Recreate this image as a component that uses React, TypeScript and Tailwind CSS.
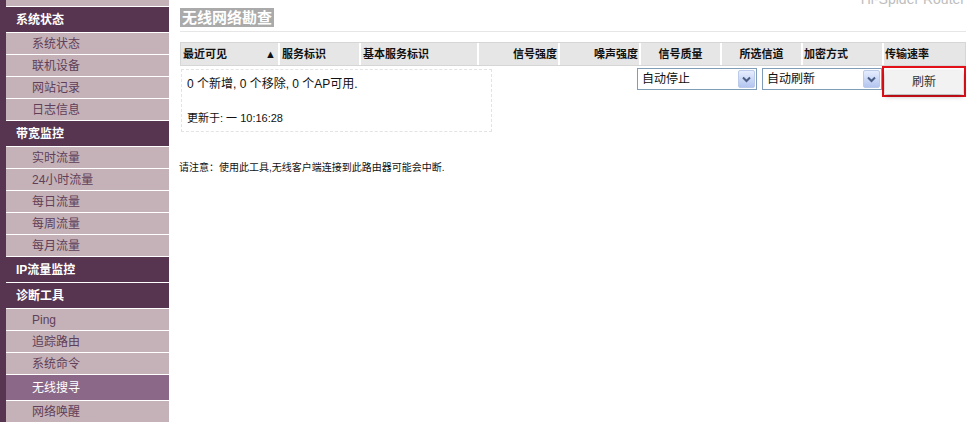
import React from "react";

type Item = { label: string; kind: "top" | "head" | "sub" | "active" };

const menu: Item[] = [
  { label: "", kind: "top" },
  { label: "系统状态", kind: "head" },
  { label: "系统状态", kind: "sub" },
  { label: "联机设备", kind: "sub" },
  { label: "网站记录", kind: "sub" },
  { label: "日志信息", kind: "sub" },
  { label: "带宽监控", kind: "head" },
  { label: "实时流量", kind: "sub" },
  { label: "24小时流量", kind: "sub" },
  { label: "每日流量", kind: "sub" },
  { label: "每周流量", kind: "sub" },
  { label: "每月流量", kind: "sub" },
  { label: "IP流量监控", kind: "head" },
  { label: "诊断工具", kind: "head" },
  { label: "Ping", kind: "sub" },
  { label: "追踪路由", kind: "sub" },
  { label: "系统命令", kind: "sub" },
  { label: "无线搜寻", kind: "active" },
  { label: "网络唤醒", kind: "sub" },
];

const rowClass: Record<Item["kind"], string> = {
  top: "h-[7px] bg-[#c5b2b8]",
  head: "h-[26px] pl-[10px] font-bold text-white",
  sub: "h-[22px] pl-[26px] bg-[#c5b2b8] text-[#5f3f59]",
  active: "h-[26px] pl-[26px] bg-[#8b6887] text-white",
};

const cols = [
  { label: "最近可见", w: "w-[97px]", align: "justify-between pl-[2px] pr-[2px]", sort: true },
  { label: "服务标识", w: "w-[79px]", align: "justify-start pl-[2px]" },
  { label: "基本服务标识", w: "w-[116px]", align: "justify-start pl-[2px]" },
  { label: "信号强度", w: "w-[79px]", align: "justify-end pr-px" },
  { label: "噪声强度", w: "w-[79px]", align: "justify-end pr-px" },
  { label: "信号质量", w: "w-[79px]", align: "justify-center" },
  { label: "所选信道", w: "w-[79px]", align: "justify-center" },
  { label: "加密方式", w: "w-[79px]", align: "justify-start pl-px" },
  { label: "传输速率", w: "w-[81px]", align: "justify-start pl-px" },
];

const Select = ({ value }: { value: string }) => (
  <div className="flex h-[22px] w-[120px] items-center justify-between border border-[#7f9db9] bg-white pl-[4px] pr-px">
    <span className="text-[12px] leading-none text-[#111]">{value}</span>
    <span className="flex h-[18px] w-[17px] items-center justify-center rounded-[2px] border border-[#bccbea] bg-linear-to-b from-[#e6edfd] to-[#b3c5f0]">
      <svg width="9" height="7" viewBox="0 0 9 7">
        <path d="M1 1.5 L4.5 5 L8 1.5" stroke="#4a5d85" strokeWidth="2" fill="none" />
      </svg>
    </span>
  </div>
);

export default function App() {
  return (
    <div
      className="flex h-screen overflow-hidden bg-white"
      style={{ fontFamily: '"Liberation Sans", "Noto Sans CJK SC", sans-serif' }}
    >
      {/* Sidebar menu */}
      <aside className="w-[169px] shrink-0 bg-[#573450] pl-[6px] text-[12px]">
        {menu.map((m, i) => (
          <div
            key={i}
            className={`flex items-center border-b border-white ${rowClass[m.kind]}`}
          >
            {m.label}
          </div>
        ))}
      </aside>

      <main className="flex-1 pl-[11px] pr-[2px]">
        <div className="flex h-[6px] items-end justify-end pr-[1px]">
          <span className="text-[14px] leading-none text-[#bdbdbd]">Hi-Spider Router</span>
        </div>

        {/* Title */}
        <div className="mt-[2px] flex">
          <span className="h-[19px] bg-[#aaaaaa] px-[2px] text-[15px] font-bold leading-[19px] text-white">
            无线网络勘查
          </span>
        </div>
        <div className="mt-[4px] h-px bg-[#e6e6e6]" />

        {/* Table head */}
        <div className="mt-[10px] flex w-[786px] gap-[2px] border border-[#d6d6d6] bg-white">
          {cols.map((c) => (
            <div
              key={c.label}
              className={`flex h-[22px] items-center bg-[#e6e6e6] text-[11px] font-bold text-[#111] ${c.w} ${c.align}`}
            >
              <span>{c.label}</span>
              {c.sort && <span className="text-[11px] leading-none">▲</span>}
            </div>
          ))}
        </div>

        {/* Result row */}
        <div className="flex items-start">
          <div className="ml-px mt-[3px] h-[63px] w-[311px] border border-dashed border-[#e3e3e3] pl-[5px] pt-[5px] text-[#111]">
            <div className="text-[12px] leading-[18px]">0 个新增, 0 个移除, 0 个AP可用.</div>
            <div className="mt-[18px] text-[11px] leading-[14px]">更新于: 一 10:16:28</div>
          </div>
          <div className="ml-[145px] mt-[2px]">
            <Select value="自动停止" />
          </div>
          <div className="ml-[5px] mt-[2px]">
            <Select value="自动刷新" />
          </div>
          <div className="h-[31px] w-[84px] border-2 border-[#e3101a] px-[1px] pt-px">
            <button className="h-[23px] w-full bg-[#f2f2f2] text-[12px] text-[#333] shadow-[0_2px_5px_rgba(0,0,0,0.35)]">
              刷新
            </button>
          </div>
        </div>

        <p className="-ml-px mt-[29px] text-[10px] leading-[14px] text-[#111]">
          请注意：使用此工具,无线客户端连接到此路由器可能会中断.
        </p>
      </main>
    </div>
  );
}
